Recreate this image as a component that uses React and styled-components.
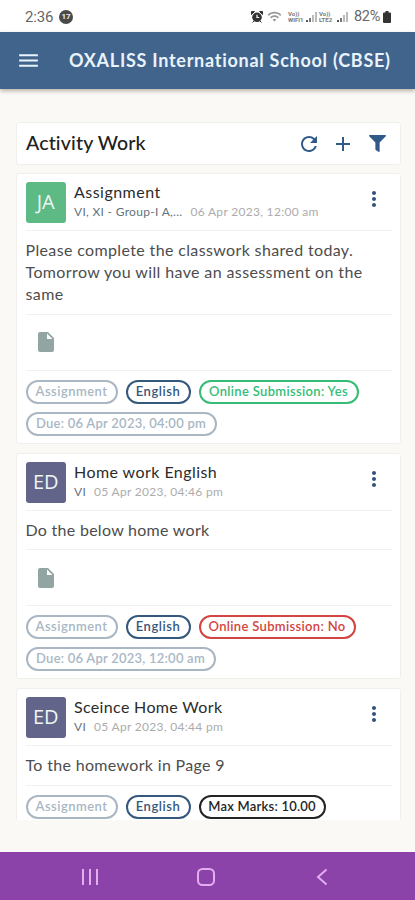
import React from "react";
import styled, { createGlobalStyle } from "styled-components";
import {
  MdAdd,
  MdInsertDriveFile,
  MdMenu,
  MdMoreVert,
  MdRefresh,
  MdWifi,
} from "react-icons/md";
import { FaFilter } from "react-icons/fa";

const colors = {
  grey: "#a9b7c4",
  navy: "#35587d",
  green: "#35bd78",
  red: "#d24540",
  black: "#222426",
};

const activities = [
  {
    initials: "JA",
    avatar: "#5dba85",
    title: "Assignment",
    titleSpacing: 0.47,
    group: "VI, XI - Group-I A,...",
    date: "06 Apr 2023, 12:00 am",
    lines: [
      ["Please complete the classwork shared today.", 0.36],
      ["Tomorrow you will have an assessment on the", 0.38],
      ["same", 0.38],
    ],
    hasFile: true,
    chips: [
      { label: "Assignment", color: colors.grey, width: 92, spacing: 0.45 },
      { label: "English", color: colors.navy, width: 65, spacing: 0.56 },
      { label: "Online Submission: Yes", color: colors.green, width: 160, spacing: 0.33 },
      { label: "Due: 06 Apr 2023, 04:00 pm", color: colors.grey, width: 191, spacing: 0.25 },
    ],
  },
  {
    initials: "ED",
    avatar: "#62648a",
    title: "Home work English",
    titleSpacing: 0.44,
    group: "VI",
    date: "05 Apr 2023, 04:46 pm",
    lines: [["Do the below home work", 0.28]],
    hasFile: true,
    chips: [
      { label: "Assignment", color: colors.grey, width: 92, spacing: 0.45 },
      { label: "English", color: colors.navy, width: 65, spacing: 0.56 },
      { label: "Online Submission: No", color: colors.red, width: 157, spacing: 0.33 },
      { label: "Due: 06 Apr 2023, 12:00 am", color: colors.grey, width: 190, spacing: 0.23 },
    ],
  },
  {
    initials: "ED",
    avatar: "#62648a",
    title: "Sceince Home Work",
    titleSpacing: 0.34,
    group: "VI",
    date: "05 Apr 2023, 04:44 pm",
    lines: [["To the homework in Page 9", 0.33]],
    hasFile: false,
    chips: [
      { label: "Assignment", color: colors.grey, width: 92, spacing: 0.45 },
      { label: "English", color: colors.navy, width: 65, spacing: 0.56 },
      { label: "Max Marks: 10.00", color: colors.black, width: 127, spacing: 0.22 },
    ],
  },
];

const AlarmIcon = () => (
  <svg width="12" height="12" viewBox="0 0 12 12">
    <path d="M0.500 0.500h3l-3 3zM11.500 0.500h-3l3 3zM1.500 11.500l2-2M10.500 11.500l-2-2" fill="#333" stroke="#333" />
    <circle cx="6" cy="6.300" r="4.800" fill="#333" />
    <path d="M6 3.800v2.700h2.200" fill="none" stroke="#fff" strokeWidth="1.200" />
  </svg>
);

const SignalBars = () => (
  <svg width="12" height="12" viewBox="0 0 12 12">
    <rect x="0" y="9" width="2" height="2" fill="#555" />
    <rect x="3" y="7" width="2" height="4" fill="#777" />
    <rect x="6" y="4" width="2" height="7" fill="#bbb" />
    <rect x="9" y="1" width="2" height="10" fill="#bbb" />
  </svg>
);

const BatteryIcon = () => (
  <svg width="8" height="12" viewBox="0 0 8 12">
    <path d="M2.500 0h3v1.500H7a1 1 0 0 1 1 1V11a1 1 0 0 1-1 1H1a1 1 0 0 1-1-1V2.500a1 1 0 0 1 1-1h1.500z" fill="#333" />
  </svg>
);

const StatusBar = () => (
  <StyledStatusBar>
    <StyledClock>2:36</StyledClock>
    <StyledCount>17</StyledCount>
    <StyledStatusIcons>
      <AlarmIcon />
      <StyledWifi>
        <MdWifi size={15} />
      </StyledWifi>
      <StyledNetwork>
        <span>Vo))</span>
        <span>WIFI1</span>
      </StyledNetwork>
      <SignalBars />
      <StyledNetwork>
        <span>Vo))</span>
        <span>LTE2</span>
      </StyledNetwork>
      <SignalBars />
      <StyledPercent>82%</StyledPercent>
      <BatteryIcon />
    </StyledStatusIcons>
  </StyledStatusBar>
);

const ActivityCard = ({ activity }) => (
  <StyledCard>
    <StyledCardHeader>
      <StyledAvatar $color={activity.avatar}>{activity.initials}</StyledAvatar>
      <StyledHeading>
        <StyledTitle $spacing={activity.titleSpacing}>{activity.title}</StyledTitle>
        <StyledMeta>
          <StyledGroup>{activity.group}</StyledGroup>
          <StyledDate>{activity.date}</StyledDate>
        </StyledMeta>
      </StyledHeading>
      <StyledMore>
        <MdMoreVert size={24} />
      </StyledMore>
    </StyledCardHeader>
    <StyledBody>
      {activity.lines.map(([text, spacing]) => (
        <StyledLine key={text} $spacing={spacing}>
          {text}
        </StyledLine>
      ))}
    </StyledBody>
    {activity.hasFile && (
      <StyledAttachment>
        <MdInsertDriveFile size={24} />
      </StyledAttachment>
    )}
    <StyledChips>
      {activity.chips.map(({ label, color, width, spacing }) => (
        <StyledChip key={label} $color={color} $width={width} $spacing={spacing}>
          {label}
        </StyledChip>
      ))}
    </StyledChips>
  </StyledCard>
);

const App = () => (
  <StyledScreen>
    <GlobalStyle />
    <StatusBar />
    <StyledAppBar>
      <MdMenu size={25} />
      <StyledSchool>OXALISS International School (CBSE)</StyledSchool>
    </StyledAppBar>
    <StyledContent>
      <StyledPageHeader>
        <StyledPageTitle>Activity Work</StyledPageTitle>
        <StyledActions>
          <MdRefresh size={24} />
          <MdAdd size={24} />
          <FaFilter size={17} />
        </StyledActions>
      </StyledPageHeader>
      <StyledList>
        {activities.map((activity) => (
          <ActivityCard key={activity.title} activity={activity} />
        ))}
      </StyledList>
    </StyledContent>
    <StyledNavBar>
      <svg width="18" height="18" viewBox="0 0 18 18">
        <path d="M2 1v16M9 1v16M16 1v16" />
      </svg>
      <svg width="20" height="20" viewBox="0 0 20 20">
        <rect x="2" y="2" width="16" height="16" rx="4.500" />
      </svg>
      <svg width="18" height="18" viewBox="0 0 18 18">
        <path d="M13.500 1.500 5 9l8.500 7.500" />
      </svg>
    </StyledNavBar>
  </StyledScreen>
);

export default App;

const GlobalStyle = createGlobalStyle`
  * {
    box-sizing: border-box;
  }
  body {
    margin: 0;
    font-family: Lato, "Noto Sans", sans-serif;
  }
  svg {
    display: block;
    flex: none;
  }
`;

const StyledScreen = styled.div`
  display: flex;
  flex-direction: column;
  width: 415px;
  height: 900px;
  overflow: hidden;
  background: #faf9f5;
`;

const StyledStatusBar = styled.div`
  display: flex;
  align-items: center;
  flex: none;
  height: 32px;
  padding: 1px 24px 0 25px;
  background: #fff;
  color: #666;
`;

const StyledClock = styled.div`
  width: 34px;
  font: 400 15px Roboto, sans-serif;
  letter-spacing: -0.200px;
`;

const StyledCount = styled.div`
  width: 14px;
  height: 14px;
  border-radius: 50%;
  background: #4a4a4a;
  color: #eee;
  font: 700 8px/14px Roboto, sans-serif;
  text-align: center;
`;

const StyledStatusIcons = styled.div`
  display: flex;
  align-items: center;
  margin-left: auto;
`;

const StyledWifi = styled.div`
  margin: 0 5px 0 4px;
  color: #999;
`;

const StyledNetwork = styled.div`
  display: flex;
  flex-direction: column;
  width: 19px;
  padding-left: 1px;
  font: 700 6px/6px Roboto, sans-serif;
  white-space: nowrap;
  color: #777;
`;

const StyledPercent = styled.div`
  margin: 0 3px 0 5px;
  font: 400 14.500px Roboto, sans-serif;
  letter-spacing: -0.300px;
`;

const StyledAppBar = styled.header`
  display: flex;
  align-items: center;
  flex: none;
  height: 57px;
  padding-left: 16px;
  background: #41648d;
  color: #e9f3fb;
  box-shadow: 0 2px 4px rgba(60, 50, 30, 0.35);
`;

const StyledSchool = styled.div`
  margin-left: 28px;
  padding-bottom: 1px;
  font-size: 18px;
  font-weight: 700;
  letter-spacing: 0.730px;
  white-space: nowrap;
`;

const StyledContent = styled.main`
  display: flex;
  flex-direction: column;
  gap: 8px;
  flex: none;
  height: 699px;
  margin: 32px 14px 0 16px;
  padding-top: 1px;
  overflow: hidden;
`;

const StyledPageHeader = styled.div`
  display: flex;
  align-items: center;
  flex: none;
  height: 43px;
  padding: 0 14px 0 9px;
  border: 1px solid #f0efec;
  border-radius: 3px;
  background: #fff;
`;

const StyledPageTitle = styled.div`
  padding-bottom: 2px;
  font-size: 19.500px;
  font-weight: 500;
  letter-spacing: 0.150px;
  color: #202020;
`;

const StyledActions = styled.div`
  display: flex;
  align-items: center;
  gap: 10px;
  margin-left: auto;
  color: #31598a;

  svg:last-child {
    margin-left: 4px;
  }
`;

const StyledList = styled.div`
  display: flex;
  flex-direction: column;
  gap: 9px;
`;

const StyledCard = styled.article`
  padding: 8px 8.500px 7px;
  border: 1px solid #f0efec;
  border-radius: 3px;
  background: #fff;
`;

const StyledCardHeader = styled.div`
  display: flex;
  height: 49px;
  border-bottom: 1px solid #f0f0f0;
`;

const StyledAvatar = styled.div`
  width: 40.500px;
  height: 41px;
  border-radius: 3px;
  background: ${({ $color }) => $color};
  color: #eef7f6;
  font: 500 20px/40px "Open Sans", sans-serif;
  text-align: center;
`;

const StyledHeading = styled.div`
  margin-left: 8px;
`;

const StyledTitle = styled.div`
  font-size: 16px;
  line-height: 20px;
  letter-spacing: ${({ $spacing }) => $spacing}px;
  color: #2b2b2b;
`;

const StyledMeta = styled.div`
  display: flex;
  gap: 8px;
  margin-top: 2px;
  font-size: 12px;
  line-height: 16px;
  letter-spacing: 0.300px;
`;

const StyledGroup = styled.span`
  color: #64727c;
`;

const StyledDate = styled.span`
  color: #acacac;
`;

const StyledMore = styled.div`
  margin: 5px 5.500px 0 auto;
  color: #33527c;
`;

const StyledBody = styled.div`
  padding: 8px 0 8.500px;
  border-bottom: 1px solid #f0f0f0;
`;

const StyledLine = styled.div`
  font-size: 16px;
  line-height: 22px;
  letter-spacing: ${({ $spacing }) => $spacing}px;
  white-space: nowrap;
  color: #4d4d4d;
`;

const StyledAttachment = styled.div`
  display: flex;
  align-items: center;
  height: 56px;
  padding-left: 8px;
  border-bottom: 1px solid #f0f0f0;
  color: #93a5a2;
`;

const StyledChips = styled.div`
  display: flex;
  flex-wrap: wrap;
  gap: 8px;
  padding-top: 9px;
  margin-right: -8px;
`;

const StyledChip = styled.div`
  width: ${({ $width }) => $width}px;
  height: 24px;
  border: 2px solid ${({ $color }) => $color};
  border-radius: 12px;
  color: ${({ $color }) => $color};
  font-size: 13px;
  font-weight: 600;
  line-height: 19px;
  letter-spacing: ${({ $spacing }) => $spacing}px;
  text-align: center;
  white-space: nowrap;
`;

const StyledNavBar = styled.nav`
  display: flex;
  align-items: center;
  justify-content: space-between;
  flex: none;
  height: 48px;
  margin-top: auto;
  padding: 2px 84px 0 81px;
  background: #8b42a9;

  svg {
    fill: none;
    stroke: #e2aef0;
    stroke-width: 2;
  }
`;
